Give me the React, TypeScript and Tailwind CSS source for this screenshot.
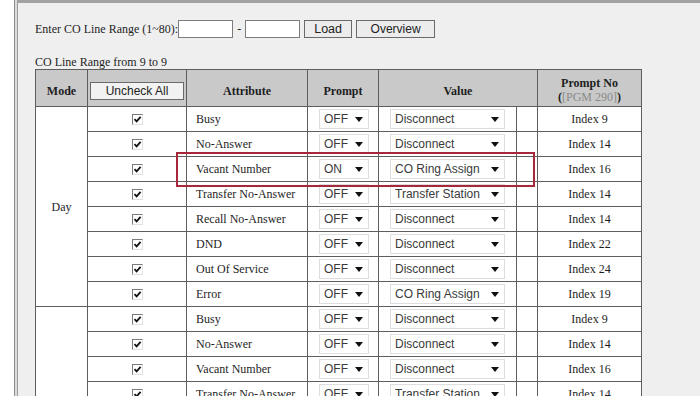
import React from "react";

interface Row {
  attr: string;
  prompt: string;
  value: string;
  index: number;
}

const dayRows: Row[] = [
  { attr: "Busy", prompt: "OFF", value: "Disconnect", index: 9 },
  { attr: "No-Answer", prompt: "OFF", value: "Disconnect", index: 14 },
  { attr: "Vacant Number", prompt: "ON", value: "CO Ring Assign", index: 16 },
  { attr: "Transfer No-Answer", prompt: "OFF", value: "Transfer Station", index: 14 },
  { attr: "Recall No-Answer", prompt: "OFF", value: "Disconnect", index: 14 },
  { attr: "DND", prompt: "OFF", value: "Disconnect", index: 22 },
  { attr: "Out Of Service", prompt: "OFF", value: "Disconnect", index: 24 },
  { attr: "Error", prompt: "OFF", value: "CO Ring Assign", index: 19 }
];

const nightRows: Row[] = [
  { attr: "Busy", prompt: "OFF", value: "Disconnect", index: 9 },
  { attr: "No-Answer", prompt: "OFF", value: "Disconnect", index: 14 },
  { attr: "Vacant Number", prompt: "OFF", value: "Disconnect", index: 16 },
  { attr: "Transfer No-Answer", prompt: "OFF", value: "Transfer Station", index: 14 }
];

function Check() {
  return (
    <span className="inline-flex h-[11px] w-[11px] items-center justify-center border border-t-[#7a7a7a] border-l-[#7a7a7a] border-b-[#e2e2e2] border-r-[#e2e2e2] bg-white align-middle">
      <svg width="9" height="9" viewBox="0 0 9 9">
        <path d="M1.5 4.2 L3.6 6.4 L7.6 1.8" fill="none" stroke="#111" strokeWidth="1.8" />
      </svg>
    </span>
  );
}

function Select({ text, w }: { text: string; w: string }) {
  return (
    <div
      className={`flex h-[20px] ${w} items-center justify-between border border-[#dedede] bg-white pl-[4px] pr-[5px] font-['Liberation_Sans',Arial,sans-serif] text-[12px] text-[#3a3a3a]`}
    >
      <span>{text}</span>
      <svg width="8" height="5" viewBox="0 0 8 5">
        <path d="M0 0 H8 L4 5 Z" fill="#111" />
      </svg>
    </div>
  );
}

function Block({ mode, rows }: { mode: string; rows: Row[] }) {
  return (
    <>
      {rows.map((r, i) => (
        <tr key={mode + r.attr} className="h-[25px] bg-white">
          {i === 0 && (
            <td rowSpan={rows.length} className="border border-[#5e5e5e] text-center align-middle">
              {mode}
            </td>
          )}
          <td className="border border-[#5e5e5e] text-center leading-none">
            <Check />
          </td>
          <td className="border border-[#5e5e5e] pl-[9px]">{r.attr}</td>
          <td className="border border-[#5e5e5e] pl-[11px]">
            <Select text={r.prompt} w="w-[50px]" />
          </td>
          <td className="border border-[#5e5e5e] pl-[11px]">
            <Select text={r.value} w="w-[115px]" />
          </td>
          <td className="border border-[#5e5e5e]" />
          <td className="border border-[#5e5e5e] text-center">Index {r.index}</td>
        </tr>
      ))}
    </>
  );
}

export default function App() {
  return (
    <div className="flex h-[396px] w-[700px] overflow-hidden bg-white font-['Liberation_Serif','Times_New_Roman',serif] text-[12px] text-[#1e1e1e]">
      <div className="w-[14px] bg-white" />
      <div className="w-px bg-[#8c8c8c]" />
      <div className="w-[2px] bg-[#dadada]" />
      <div className="w-px bg-[#9c9c9c]" />
      <div className="flex-1 border-t-[3px] border-[#a2a2a2] bg-[#efefef] pl-[17px] pt-[17px]">
        <div className="flex h-[18px] items-center">
          <span>Enter CO Line Range (1~80):</span>
          <div className="h-[18px] w-[55px] border border-[#7c7c7c] bg-white" />
          <span className="mx-[4px]">-</span>
          <div className="h-[18px] w-[55px] border border-[#7c7c7c] bg-white" />
          <button className="ml-[4px] h-[18px] w-[48px] border border-[#6a6a6a] bg-[#ececec] font-['Liberation_Sans',Arial,sans-serif] text-[12.5px] leading-none text-[#222]">
            Load
          </button>
          <button className="ml-[4px] h-[18px] w-[79px] border border-[#6a6a6a] bg-[#ececec] font-['Liberation_Sans',Arial,sans-serif] text-[12px] leading-none text-[#222]">
            Overview
          </button>
        </div>
        <div className="mt-[17px] h-[14px] leading-[14px]">CO Line Range from 9 to 9</div>
        <div className="relative w-[606px]">
          <table className="w-[606px] table-fixed border-collapse">
            <colgroup>
              <col className="w-[52px]" />
              <col className="w-[99px]" />
              <col className="w-[121px]" />
              <col className="w-[71px]" />
              <col className="w-[138px]" />
              <col className="w-[21px]" />
              <col className="w-[104px]" />
            </colgroup>
            <thead>
              <tr className="h-[37px] bg-[#c9c9c9] font-bold">
                <th className="border border-[#5e5e5e] pt-[6px]">Mode</th>
                <th className="border border-[#5e5e5e] px-[2px] pt-[5px]">
                  <div className="mx-auto flex h-[18px] w-[94px] items-center justify-center border border-[#6a6a6a] bg-[#f2f2f2] font-['Liberation_Sans',Arial,sans-serif] text-[12px] font-normal text-[#222]">
                    Uncheck All
                  </div>
                </th>
                <th className="border border-[#5e5e5e] pt-[6px]">Attribute</th>
                <th className="border border-[#5e5e5e] pt-[6px]">Prompt</th>
                <th colSpan={2} className="border border-[#5e5e5e] pt-[6px]">Value</th>
                <th className="border border-[#5e5e5e] pt-[4px] leading-[14px]">
                  Prompt No
                  <br />
                  (<span className="font-normal text-[#8a8a8a]">[PGM 290]</span>)
                </th>
              </tr>
            </thead>
            <tbody>
              <Block mode="Day" rows={dayRows} />
              <Block mode="" rows={nightRows} />
            </tbody>
          </table>
          <div className="absolute left-[141px] top-[83px] h-[35px] w-[359px] border-2 border-[#a8283b]" />
        </div>
      </div>
    </div>
  );
}
